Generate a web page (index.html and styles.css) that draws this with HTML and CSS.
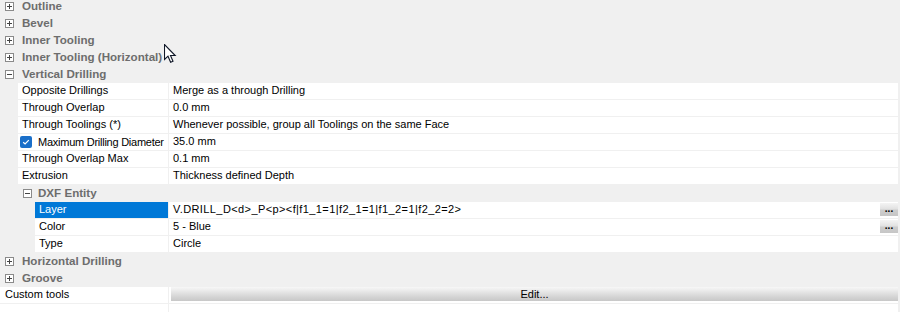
FILE: index.html
```html
<!DOCTYPE html>
<html lang="en">
<head>
  <meta charset="UTF-8">
  <title>Tool Properties</title>
  <link rel="stylesheet" href="styles.css">
</head>
<body>
  <div class="grid">
    <div class="cat"><span class="exp plus"></span><span class="cat-label">Outline</span></div>
    <div class="cat"><span class="exp plus"></span><span class="cat-label">Bevel</span></div>
    <div class="cat"><span class="exp plus"></span><span class="cat-label">Inner Tooling</span></div>
    <div class="cat"><span class="exp plus"></span><span class="cat-label">Inner Tooling (Horizontal)</span></div>
    <div class="cat"><span class="exp"></span><span class="cat-label">Vertical Drilling</span></div>

    <div class="prop">
      <div class="name">Opposite Drillings</div>
      <div class="value">Merge as a through Drilling</div>
    </div>
    <div class="prop">
      <div class="name">Through Overlap</div>
      <div class="value">0.0 mm</div>
    </div>
    <div class="prop">
      <div class="name">Through Toolings (*)</div>
      <div class="value">Whenever possible, group all Toolings on the same Face</div>
    </div>
    <div class="prop">
      <div class="name check-name">
        <span class="check">
          <svg width="12" height="12" viewBox="0 0 12 12"><path d="M3.2 6.2 L5.1 8 L8.8 4.1" fill="none" stroke="#fff" stroke-width="1.2"/></svg>
        </span>
        <span class="tight">Maximum Drilling Diameter</span>
      </div>
      <div class="value">35.0 mm</div>
    </div>
    <div class="prop">
      <div class="name">Through Overlap Max</div>
      <div class="value">0.1 mm</div>
    </div>
    <div class="prop">
      <div class="name">Extrusion</div>
      <div class="value">Thickness defined Depth</div>
    </div>

    <div class="cat sub"><span class="exp"></span><span class="cat-label">DXF Entity</span></div>

    <div class="prop level2">
      <div class="name selected">Layer</div>
      <div class="value"><span class="wide">V.DRILL_D&lt;d&gt;_P&lt;p&gt;&lt;f|f1_1=1|f2_1=1|f1_2=1|f2_2=2&gt;</span><span class="dots">...</span></div>
    </div>
    <div class="prop level2">
      <div class="name">Color</div>
      <div class="value">5 - Blue<span class="dots">...</span></div>
    </div>
    <div class="prop level2">
      <div class="name">Type</div>
      <div class="value">Circle</div>
    </div>

    <div class="cat"><span class="exp plus"></span><span class="cat-label">Horizontal Drilling</span></div>
    <div class="cat"><span class="exp plus"></span><span class="cat-label">Groove</span></div>

    <div class="prop top">
      <div class="name">Custom tools</div>
      <div class="value btn-cell"><span class="edit-btn">Edit...</span></div>
    </div>
    <div class="prop top">
      <div class="name"></div>
      <div class="value"></div>
    </div>
  </div>

  <!-- mouse pointer -->
  <svg class="cursor" width="14" height="20" viewBox="0 0 14 20">
    <path d="M0.5 0.5 L0.5 15.5 L4 12.2 L6.6 18.3 L9 17.2 L6.5 11.5 L11.2 11.5 Z" fill="#fff" stroke="#101828" stroke-width="1.1"/>
  </svg>
</body>
</html>
```

FILE: styles.css
```css
body {
  margin: 0;
  background-color: #f0f0f0;
  font-family: "Liberation Sans", Arial, sans-serif;
  font-size: 11px;
  color: #000;
  overflow: hidden;
}

.grid {
  margin-top: -2px;
}

/* category rows */
.cat {
  height: 17px;
  display: flex;
  align-items: center;
  padding-left: 5px;
  font-size: 11.6px;
  font-weight: bold;
  color: #6d6d6d;
}

.cat.sub {
  padding-left: 23px;
}

.cat.sub .cat-label {
  margin-left: 6px;
}

.cat-label {
  margin-left: 8px;
  margin-top: -2px;
}

.exp {
  position: relative;
  box-sizing: border-box;
  width: 9px;
  height: 9px;
  border: 1px solid #8a8a8a;
  background-color: #fff;
}

.exp::before {
  content: "";
  position: absolute;
  left: 1px;
  top: 3px;
  width: 5px;
  height: 1px;
  background-color: #444;
}

.exp.plus::after {
  content: "";
  position: absolute;
  left: 3px;
  top: 1px;
  width: 1px;
  height: 5px;
  background-color: #444;
}

/* property rows */
.prop {
  display: flex;
  height: 16px;
  margin: 0 2px 1px 18px;
  line-height: 15px;
}

.prop .name {
  width: 146px;
  padding-left: 4px;
  margin-right: 1px;
  background-color: #fff;
  white-space: nowrap;
}

.prop .value {
  flex: 1;
  display: flex;
  padding-left: 4px;
  background-color: #fff;
  white-space: nowrap;
}

.prop.level2 {
  margin-left: 35px;
}

.prop.level2 .name {
  width: 129px;
}

.prop.top {
  margin-left: 0;
}

.prop.top .name {
  width: 163px;
  padding-left: 5px;
}

.name.selected {
  background-color: #0078d7;
  color: #fff;
}

.check-name {
  display: flex;
  align-items: center;
}

.prop .check-name {
  width: 148px;
  padding-left: 2px;
}

.tight {
  letter-spacing: -0.25px;
}

.wide {
  letter-spacing: 0.4px;
}

.check {
  width: 12px;
  height: 12px;
  margin-right: 6px;
  border-radius: 2px;
  background-color: #1a6fc9;
  display: flex;
}

.dots {
  margin-left: auto;
  margin-top: 1px;
  width: 18px;
  height: 13px;
  line-height: 11px;
  font-size: 10px;
  font-weight: bold;
  text-align: center;
  letter-spacing: 0;
  background: linear-gradient(#f4f4f4, #e2e2e2 45%, #cdcdcd 55%, #c6c6c6);
}

.btn-cell {
  padding-left: 2px !important;
}

.edit-btn {
  flex: 1;
  height: 14px;
  line-height: 14px;
  text-align: center;
  background: linear-gradient(#f7f7f7, #ebebeb 25%, #dedede 50%, #d2d2d2 75%, #c8c8c8);
}

.cursor {
  position: absolute;
  left: 164px;
  top: 44px;
}
```
